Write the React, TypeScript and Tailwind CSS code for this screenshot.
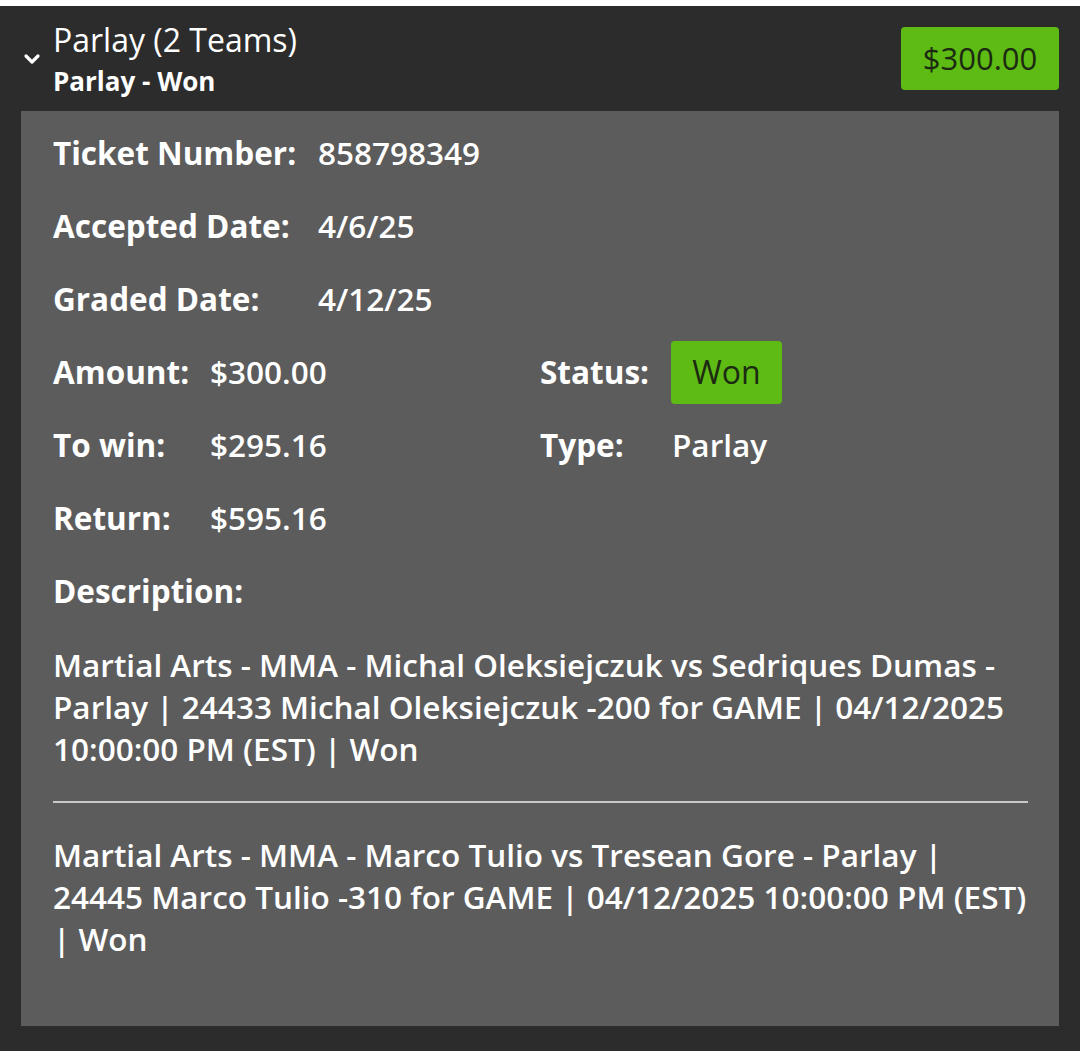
import React from "react";

const font = { fontFamily: "'Open Sans', 'Noto Sans', sans-serif" };

function Row({ label, value, labelW }: { label: string; value: React.ReactNode; labelW: string }) {
  return (
    <div className="flex items-center h-[42px] mb-[31px]">
      <span className={`${labelW} font-bold shrink-0`}>{label}</span>
      <span>{value}</span>
    </div>
  );
}

export default function App() {
  return (
    <div style={font} className="min-h-screen w-full bg-[#2c2c2c] border-t-[6px] border-white text-white">
      {/* header */}
      <div className="flex items-start justify-between pt-[16px] pb-[13px] pr-[21px]">
        <div className="flex">
          <div className="w-[53px] pl-[23px] pt-[31px]">
            <svg width="18" height="12" viewBox="0 0 18 12" fill="none">
              <path d="M3 3 L9 9 L15 3" stroke="white" strokeWidth="3.2" strokeLinecap="round" strokeLinejoin="round" />
            </svg>
          </div>
          <div>
            <div className="text-[32px] leading-[36px] font-medium">Parlay (2 Teams)</div>
            <div className="text-[26px] leading-[34px] font-bold mt-[6px]">Parlay - Won</div>
          </div>
        </div>
        <div className="mt-[5px] w-[158px] h-[63px] rounded-[4px] bg-[#5dbb14] text-[#1c2a12] text-[31px] font-medium flex items-center justify-center">
          $300.00
        </div>
      </div>

      {/* detail panel */}
      <div className="mx-[21px] bg-[#5c5c5c] pl-[32px] pr-[31px] pt-[21px] pb-[66px] text-[31.5px] leading-[42px] font-semibold">
        <Row label="Ticket Number:" value="858798349" labelW="w-[265px]" />
        <Row label="Accepted Date:" value="4/6/25" labelW="w-[265px]" />
        <Row label="Graded Date:" value="4/12/25" labelW="w-[265px]" />

        <div className="flex items-center h-[42px] mb-[31px]">
          <div className="flex w-[487px] shrink-0">
            <span className="w-[157px] font-bold">Amount:</span>
            <span>$300.00</span>
          </div>
          <span className="w-[131px] font-bold">Status:</span>
          <span className="w-[111px] h-[63px] rounded-[4px] bg-[#5dbb14] text-[#1c2a12] text-[32px] font-medium flex items-center justify-center">
            Won
          </span>
        </div>

        <div className="flex items-center h-[42px] mb-[31px]">
          <div className="flex w-[487px] shrink-0">
            <span className="w-[157px] font-bold">To win:</span>
            <span>$295.16</span>
          </div>
          <span className="w-[132px] font-bold">Type:</span>
          <span>Parlay</span>
        </div>

        <Row label="Return:" value="$595.16" labelW="w-[157px]" />

        <div className="h-[42px] font-bold">Description:</div>

        <div className="mt-[32px]">
          Martial Arts - MMA - Michal Oleksiejczuk vs Sedriques Dumas - Parlay | 24433 Michal Oleksiejczuk -200 for GAME | 04/12/2025 10:00:00 PM (EST) | Won
        </div>
        <div className="my-[31px] h-[2px] bg-[#c9c9c9]" />
        <div>
          Martial Arts - MMA - Marco Tulio vs Tresean Gore - Parlay | 24445 Marco Tulio -310 for GAME | 04/12/2025 10:00:00 PM (EST) | Won
        </div>
      </div>
      <div className="h-[26px]" />
    </div>
  );
}
